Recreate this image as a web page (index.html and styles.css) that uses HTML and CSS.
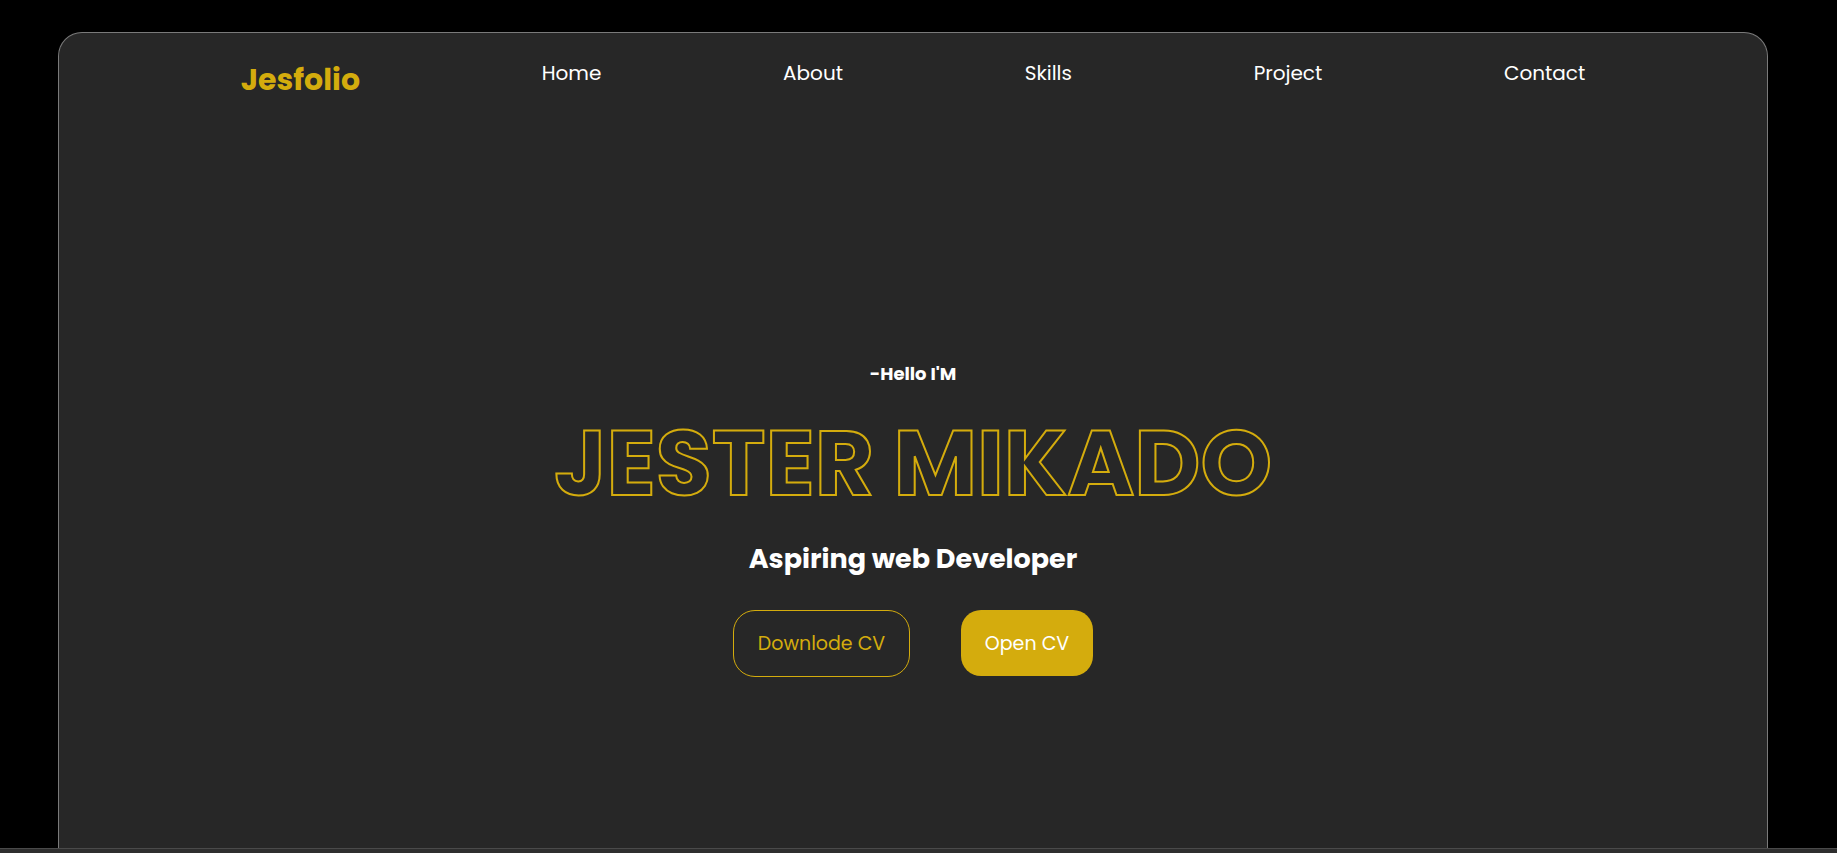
FILE: index.html
```html
<!DOCTYPE html>
<html lang="en">
<head>
<meta charset="utf-8">
<title>Jesfolio</title>
<link rel="stylesheet" href="styles.css">
</head>
<body>
<div class="frame">
  <nav class="nav">
    <a class="logo" href="#">Jesfolio</a>
    <a class="nav-link" href="#">Home</a>
    <a class="nav-link" href="#">About</a>
    <a class="nav-link" href="#">Skills</a>
    <a class="nav-link" href="#">Project</a>
    <a class="nav-link" href="#">Contact</a>
  </nav>
  <section class="hero">
    <p class="hello">-Hello I'M</p>
    <h1 class="name">JESTER MIKADO</h1>
    <h2 class="role">Aspiring web Developer</h2>
    <div class="actions">
      <a class="btn btn-outline" href="#">Downlode CV</a>
      <a class="btn btn-fill" href="#">Open CV</a>
    </div>
  </section>
</div>
<div class="bottom-strip"></div>
</body>
</html>
```
FILE: styles.css
```css
html, body {
  margin: 0;
  padding: 0;
  background: #000;
  height: 100%;
  overflow: hidden;
}
body {
  font-family: "Poppins", "Inter", "Open Sans", sans-serif;
  color: #fff;
}
.frame {
  box-sizing: border-box;
  margin: 32px 69px 0 58px;
  height: 816px;
  background: #272727;
  border: 1px solid #7a7a7a;
  border-bottom: none;
  border-radius: 24px 24px 0 0;
}
.nav {
  display: flex;
  justify-content: space-evenly;
  align-items: flex-start;
  padding-top: 28px;
}
.logo {
  font-size: 30px;
  line-height: 38px;
  font-weight: 700;
  color: #d4ac0d;
  text-decoration: none;
}
.nav-link {
  font-size: 20px;
  line-height: 24px;
  color: #fff;
  text-decoration: none;
  font-weight: 400;
}
.hero {
  display: flex;
  flex-direction: column;
  align-items: center;
  margin-top: 265px;
}
.hello {
  margin: 0;
  font-size: 18px;
  line-height: 20px;
  font-weight: 700;
}
.name {
  margin: 31px 0 0;
  font-size: 91px;
  line-height: 96px;
  font-weight: 700;
  color: transparent;
  -webkit-text-stroke: 2px #d4ac0d;
}
.role {
  margin: 31px 0 0;
  font-size: 27px;
  line-height: 34px;
  font-weight: 700;
}
.actions {
  display: flex;
  gap: 51px;
  margin-top: 34px;
}
.btn {
  box-sizing: border-box;
  display: flex;
  align-items: center;
  justify-content: center;
  font-size: 19px;
  text-decoration: none;
}
.btn-outline {
  width: 177px;
  height: 67px;
  border: 1px solid #d4ac0d;
  border-radius: 22px;
  color: #d4ac0d;
}
.btn-fill {
  width: 132px;
  height: 66px;
  background: #d4ac0d;
  border-radius: 20px;
  color: #fff;
}
.bottom-strip {
  height: 5px;
  background: #2e2e2e;
  border-top: 1px solid #4a4a4a;
}
```
